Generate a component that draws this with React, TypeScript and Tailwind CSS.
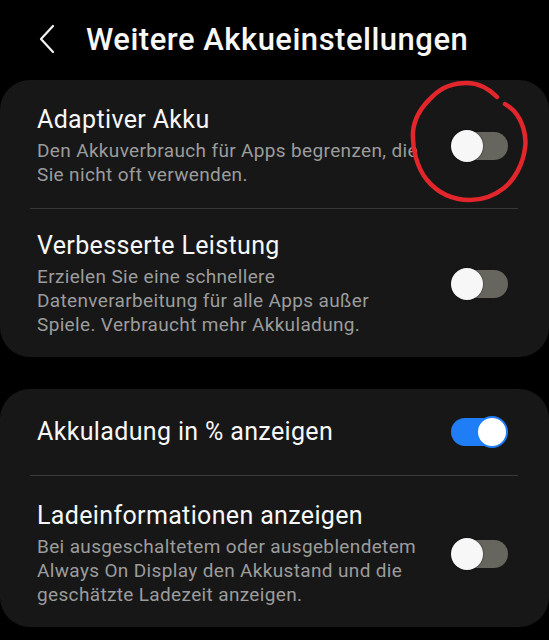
import React from "react"

type ToggleProps = { on?: boolean }

function Toggle({ on = false }: ToggleProps) {
  return (
    <div className="relative h-[32px] w-[57px] shrink-0">
      <div
        className={
          on
            ? "absolute left-0 right-[2px] top-[2px] h-[28px] rounded-full bg-[#1f7ef5]"
            : "absolute left-[2px] right-0 top-[2px] h-[28px] rounded-full bg-[#66665f]"
        }
      />
      <div
        className={
          on
            ? "absolute right-0 top-0 h-[32px] w-[32px] rounded-full border-2 border-[#1f7ef5] bg-white"
            : "absolute left-0 top-0 h-[32px] w-[32px] rounded-full bg-[#f7f7f7] shadow-[0_0_2px_rgba(0,0,0,0.6)]"
        }
      />
    </div>
  )
}

type RowProps = {
  title: string
  lines?: string[]
  on?: boolean
  className?: string
  children?: React.ReactNode
}

function SettingRow({ title, lines, on, className, children }: RowProps) {
  return (
    <div className={"relative flex items-center justify-between pl-[37px] pr-[41px] " + (className ?? "")}>
      <div className="min-w-0">
        <p className="whitespace-nowrap text-[25px] leading-[30px] tracking-[0.35px] text-[#f7f7f7]">{title}</p>
        {lines ? (
          <p className="mt-[4px] whitespace-nowrap text-[19px] leading-[24px] tracking-[0.35px] text-[#9c9c9c]">
            {lines.map((l, i) => (
              <span key={i} className="block">
                {l}
              </span>
            ))}
          </p>
        ) : null}
      </div>
      <Toggle on={on} />
      {children}
    </div>
  )
}

function Divider() {
  return <div className="ml-[30px] mr-[31px] h-px bg-[#383838]" />
}

export default function App() {
  return (
    <div className="h-[640px] overflow-hidden bg-black font-['Roboto','Liberation_Sans',sans-serif]">
      <header className="flex h-[80px] items-center pb-[2px]">
        <svg className="ml-[36px] h-[30px] w-[22px]" viewBox="0 0 22 30" fill="none" aria-hidden>
          <path d="M17 2 L5 15 L17 28" stroke="#f2f2f2" strokeWidth="2.2" strokeLinecap="round" strokeLinejoin="round" />
        </svg>
        <h1 className="ml-[28px] text-[31px] font-medium leading-none tracking-[0.5px] text-[#f7f7f7]">
          Weitere Akkueinstellungen
        </h1>
      </header>

      <section className="rounded-[30px] bg-[#171717]">
        <SettingRow
          title="Adaptiver Akku"
          lines={["Den Akkuverbrauch für Apps begrenzen, die", "Sie nicht oft verwenden."]}
          className="pb-[21px] pt-[25px]"
        >
          <svg
            className="pointer-events-none absolute left-[405px] top-[-2px] h-[130px] w-[130px]"
            viewBox="405 78 130 130"
            fill="none"
            aria-hidden
          >
            <path
              d="M497 97 C488 88 477 83 467 83 C455 83 443 86 433 96 C422 106 414 118 413 132 C412 148 417 168 427 180 C437 192 452 200 470 200 C482 200 494 196 504 188 C515 179 523 164 525 148 C527 135 522 120 514 111 C511 108 508 106 505 104"
              stroke="#e3262b"
              strokeWidth="4.5"
              strokeLinecap="round"
            />
          </svg>
        </SettingRow>
        <Divider />
        <SettingRow
          title="Verbesserte Leistung"
          lines={["Erzielen Sie eine schnellere", "Datenverarbeitung für alle Apps außer", "Spiele. Verbraucht mehr Akkuladung."]}
          className="pb-[20px] pt-[22px]"
        />
      </section>

      <section className="mt-[32px] rounded-[30px] bg-[#171717]">
        <SettingRow title="Akkuladung in % anzeigen" on className="h-[86px]" />
        <Divider />
        <SettingRow
          title="Ladeinformationen anzeigen"
          lines={["Bei ausgeschaltetem oder ausgeblendetem", "Always On Display den Akkustand und die", "geschätzte Ladezeit anzeigen."]}
          className="pb-[20px] pt-[25px]"
        />
      </section>
    </div>
  )
}
